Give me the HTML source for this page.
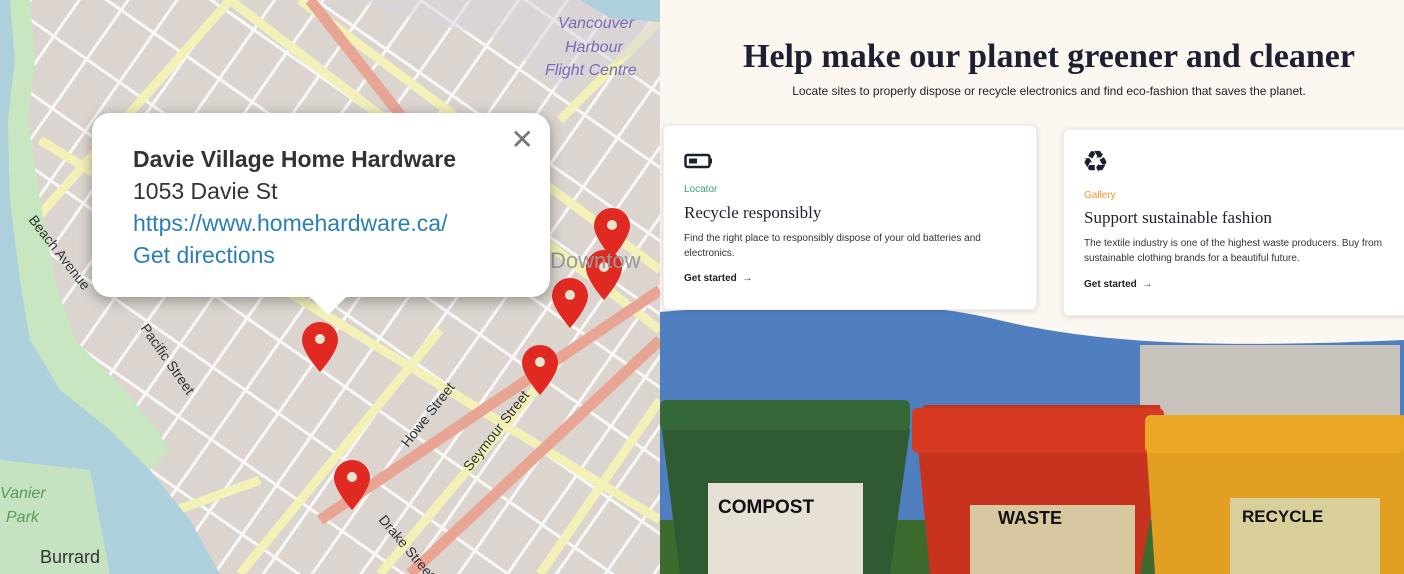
<!DOCTYPE html>
<html><head><meta charset="utf-8"><style>
*{margin:0;padding:0;box-sizing:border-box}
body{width:1404px;height:574px;overflow:hidden;position:relative;background:#fff;font-family:"Liberation Sans",sans-serif}
#map{position:absolute;left:0;top:0;width:660px;height:574px;overflow:hidden;background:#ddd6d0}
#right{position:absolute;left:660px;top:0;width:744px;height:574px;overflow:hidden;background:#fcf7f1}
.pop{position:absolute;left:92px;top:113px;width:458px;height:184px;background:#fff;border-radius:18px;box-shadow:0 3px 14px rgba(0,0,0,.35)}
.pop:after{content:"";position:absolute;left:218px;bottom:-18px;border:18px solid transparent;border-top-color:#fff;border-bottom:0}
.pop .t{position:absolute;left:41px;top:30px;font-size:23px;line-height:32px;color:#333;white-space:nowrap}
.pop b{color:#333}
.pop a{color:#2a7fb8;text-decoration:none}
.pop .x{position:absolute;right:16px;top:10px;font-size:28px;color:#777}
h1{position:absolute;left:17px;width:744px;top:38px;text-align:center;font-family:"Liberation Serif","DejaVu Serif",serif;font-size:34px;color:#1d2030;font-weight:bold;white-space:nowrap}
.sub{position:absolute;left:17px;width:744px;top:84px;text-align:center;font-size:12px;color:#222;white-space:nowrap}
.card{position:absolute;background:#fff;border-radius:6px;box-shadow:0 1px 6px rgba(0,0,0,.15);border:1px solid #eee;overflow:hidden}
.card .lab{position:absolute;left:20px;font-size:10px}
.card h3{position:absolute;left:20px;font-family:"Liberation Serif","DejaVu Serif",serif;font-size:17px;color:#1d2030;font-weight:normal;white-space:nowrap}
.card p{position:absolute;left:20px;font-size:10px;line-height:15px;color:#333;width:350px}
.card .gs{position:absolute;left:20px;font-size:10px;color:#222;font-weight:bold}
</style></head><body>
<div id="map">
<svg width="660" height="574" style="position:absolute;left:0;top:0">
<rect width="660" height="574" fill="#dcd5cf"/>
<g stroke="#fff" stroke-width="3" opacity=".85">
<g transform="rotate(35 330 287)">
<path d="M-400 -400V1000M-360 -400V1000M-320 -400V1000M-280 -400V1000M-240 -400V1000M-200 -400V1000M-160 -400V1000M-120 -400V1000M-80 -400V1000M-40 -400V1000M0 -400V1000M40 -400V1000M80 -400V1000M120 -400V1000M160 -400V1000M200 -400V1000M240 -400V1000M280 -400V1000M320 -400V1000M360 -400V1000M400 -400V1000M440 -400V1000M480 -400V1000M520 -400V1000M560 -400V1000M600 -400V1000M640 -400V1000M680 -400V1000M720 -400V1000M760 -400V1000M800 -400V1000M840 -400V1000"/>
<path d="M-400 -300H1100M-400 -240H1100M-400 -180H1100M-400 -120H1100M-400 -60H1100M-400 0H1100M-400 60H1100M-400 120H1100M-400 180H1100M-400 240H1100M-400 300H1100M-400 360H1100M-400 420H1100M-400 480H1100M-400 540H1100M-400 600H1100M-400 660H1100M-400 720H1100M-400 780H1100M-400 840H1100"/>
</g></g>
<g stroke="#f3f1b8" stroke-width="9" fill="none">
<path d="M0 260L230 0"/><path d="M230 0L660 330"/><path d="M40 140L660 520"/><path d="M300 0L660 270"/><path d="M560 120L660 20"/>
<path d="M440 330L240 574"/><path d="M560 360L380 574"/><path d="M660 400L540 574"/><path d="M260 480L0 574"/>
</g>
<g stroke="#e8a594" stroke-width="11" fill="none"><path d="M310 0L420 140"/><path d="M660 290L320 520"/><path d="M660 340L410 574"/></g>
<path d="M0 0H10L15 60L8 120L10 200L20 280L30 340L60 390L110 430L150 470L190 520L220 574H0Z" fill="#add0dc"/>
<path d="M10 0H30L35 60L28 120L40 200L55 280L75 340L115 380L150 420L170 450L150 470L110 430L60 390L30 340L20 280L10 200L8 120L15 60Z" fill="#c8e6c0"/>
<path d="M0 460L90 470L110 574H0Z" fill="#c5e3c0"/>
<path d="M350 0H660V40L560 90L500 40L420 20Z" fill="#d8d3dd" opacity=".5"/>
<path d="M580 0H660V22L610 18Z" fill="#add0dc"/>
<g fill="#e02a21">
<g transform="translate(320 322)"><path d="M0 0c-10 0-18 8-18 18c0 12 18 32 18 32s18-20 18-32c0-10-8-18-18-18z"/><circle cx="0" cy="17" r="5" fill="#e8e4d0"/></g>
<g transform="translate(612 208)"><path d="M0 0c-10 0-18 8-18 18c0 12 18 32 18 32s18-20 18-32c0-10-8-18-18-18z"/><circle cx="0" cy="17" r="5" fill="#e8e4d0"/></g>
<g transform="translate(604 250)"><path d="M0 0c-10 0-18 8-18 18c0 12 18 32 18 32s18-20 18-32c0-10-8-18-18-18z"/><circle cx="0" cy="17" r="5" fill="#e8e4d0"/></g>
<g transform="translate(570 278)"><path d="M0 0c-10 0-18 8-18 18c0 12 18 32 18 32s18-20 18-32c0-10-8-18-18-18z"/><circle cx="0" cy="17" r="5" fill="#e8e4d0"/></g>
<g transform="translate(540 345)"><path d="M0 0c-10 0-18 8-18 18c0 12 18 32 18 32s18-20 18-32c0-10-8-18-18-18z"/><circle cx="0" cy="17" r="5" fill="#e8e4d0"/></g>
<g transform="translate(352 460)"><path d="M0 0c-10 0-18 8-18 18c0 12 18 32 18 32s18-20 18-32c0-10-8-18-18-18z"/><circle cx="0" cy="17" r="5" fill="#e8e4d0"/></g>
</g>
<g font-family="Liberation Sans" font-size="16" fill="#7a6ab8" font-style="italic"><text x="558" y="28">Vancouver</text><text x="565" y="52">Harbour</text><text x="545" y="75">Flight Centre</text></g>
<text x="550" y="268" font-size="22" fill="#999">Downtow</text>
<g font-size="14" fill="#333"><text transform="translate(28 220) rotate(52)">Beach Avenue</text><text transform="translate(140 328) rotate(55)">Pacific Street</text><text transform="translate(408 448) rotate(-52)">Howe Street</text><text transform="translate(470 472) rotate(-52)">Seymour Street</text><text transform="translate(378 520) rotate(50)">Drake Street</text></g>
<g font-size="16" fill="#5a9a5a" font-style="italic"><text x="0" y="498">Vanier</text><text x="6" y="522">Park</text></g>
<text x="40" y="563" font-size="18" fill="#333">Burrard</text>
</svg>
<div class="pop"><div class="x">✕</div><div class="t"><b>Davie Village Home Hardware</b><br>1053 Davie St<br><a>https://www.homehardware.ca/</a><br><a>Get directions</a></div></div>
</div>
<div id="right">
<svg width="744" height="574" style="position:absolute;left:0;top:0">
<path d="M0 312C150 300 250 300 330 318C420 340 520 350 744 340V574H0Z" fill="#4f7fbf"/>
<rect x="480" y="345" width="260" height="80" fill="#c7c3bc"/>
<rect x="0" y="520" width="744" height="54" fill="#3d6a2d"/>
<path d="M0 415L10 400H240L250 430L230 574H20Z" fill="#2f5a32"/>
<rect x="0" y="400" width="250" height="30" rx="6" fill="#356838"/>
<path d="M255 415L265 405H500L505 440L480 574H270Z" fill="#c7331f"/>
<rect x="252" y="408" width="252" height="45" rx="6" fill="#d63a22"/>
<path d="M485 425L500 415H744V574H495Z" fill="#e1a021"/>
<rect x="485" y="415" width="259" height="38" rx="6" fill="#eaa824"/>
<rect x="48" y="483" width="155" height="91" fill="#e6e0d5"/>
<rect x="310" y="505" width="165" height="69" fill="#d8c8a0"/>
<rect x="570" y="498" width="150" height="76" fill="#d9cf9a"/>
<g font-family="Liberation Sans" font-weight="bold" fill="#111"><text x="58" y="513" font-size="19">COMPOST</text><text x="338" y="524" font-size="18">WASTE</text><text x="582" y="522" font-size="17">RECYCLE</text></g>
</svg>
<h1>Help make our planet greener and cleaner</h1>
<div class="sub">Locate sites to properly dispose or recycle electronics and find eco-fashion that saves the planet.</div>
<div class="card" style="left:3px;top:125px;width:374px;height:185px">
<svg style="position:absolute;left:20px;top:27px" width="30" height="16"><rect x="1.5" y="2" width="24" height="12" rx="2" fill="none" stroke="#1d2030" stroke-width="2.5"/><rect x="5" y="5.5" width="8" height="5" fill="#1d2030"/><rect x="26" y="5.5" width="2" height="5" fill="#1d2030"/></svg>
<div class="lab" style="top:58px;color:#3aa66a">Locator</div>
<h3 style="top:77px">Recycle responsibly</h3>
<p style="top:105px">Find the right place to responsibly dispose of your old batteries and electronics.</p>
<div class="gs" style="top:147px">Get started &nbsp;→</div>
</div>
<div class="card" style="left:403px;top:129px;width:360px;height:187px">
<div style="position:absolute;left:18px;top:15px;font-size:30px;color:#1d2030;font-family:'DejaVu Sans'">♻</div>
<div class="lab" style="top:60px;color:#f0932b">Gallery</div>
<h3 style="top:78px">Support sustainable fashion</h3>
<p style="top:106px">The textile industry is one of the highest waste producers. Buy from sustainable clothing brands for a beautiful future.</p>
<div class="gs" style="top:149px">Get started &nbsp;→</div>
</div>
</div>
</body></html>
